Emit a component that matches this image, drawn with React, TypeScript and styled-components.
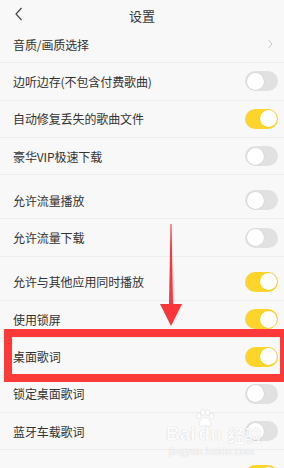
import React from "react";
import styled, { createGlobalStyle } from "styled-components";

const Global = createGlobalStyle`
  html, body { margin: 0; padding: 0; background: #f8f8f8; }
  body { width: 284px; height: 468px; overflow: hidden; font-family: "Noto Sans CJK SC", "Noto Sans", sans-serif; }
`;

const Page = styled.div`
  position: relative;
  width: 284px;
  height: 468px;
  overflow: hidden;
  background: #f8f8f8;
`;

const Header = styled.div`
  height: 26px;
  display: flex;
  align-items: center;
  justify-content: center;
  position: relative;
`;

const BackBtn = styled.div`
  position: absolute;
  left: 14px;
  top: 7px;
  width: 12px;
  height: 14px;
  display: flex;
`;

const Title = styled.div`
  font-size: 13px;
  color: #333;
  line-height: 1;
  margin-top: 4px;
`;

const Group = styled.div<{ $gap?: boolean }>`
  display: flex;
  flex-direction: column;
  margin-top: ${(p) => (p.$gap ? "7px" : "0")};
`;

const Row = styled.div`
  height: 36.3px;
  border-bottom: 1px solid #ededed;
  display: flex;
  align-items: center;
  justify-content: space-between;
  padding: 0 6px 0 13px;
`;

const Label = styled.span`
  font-size: 12px;
  color: #333;
  letter-spacing: -0.1px;
`;

const Track = styled.div<{ $on: boolean }>`
  width: 33px;
  height: 20px;
  border-radius: 10px;
  box-sizing: border-box;
  background: ${(p) => (p.$on ? "#fdd52a" : "#e1e1e1")};
  position: relative;
  flex: none;
  margin-left: auto;
`;

const Knob = styled.div<{ $on: boolean }>`
  position: absolute;
  top: 1.5px;
  left: ${(p) => (p.$on ? "14.5px" : "1.5px")};
  width: 17px;
  height: 17px;
  border-radius: 50%;
  background: #fff;
  box-shadow: 0 0 0 0.5px rgba(0, 0, 0, 0.08);
`;

const Chevron = styled.div`
  width: 8px;
  height: 10px;
  margin-right: 4px;
  display: flex;
`;

const Highlight = styled.div`
  position: absolute;
  left: 4px;
  top: 329px;
  width: 282px;
  height: 53px;
  box-sizing: border-box;
  border: 8px solid #fd3a3a;
  border-right-width: 6px;
`;

const Arrow = styled.svg`
  position: absolute;
  left: 155px;
  top: 222px;
`;

const Watermark = styled.div`
  position: absolute;
  left: 166px;
  top: 409px;
  display: flex;
  flex-direction: column;
  align-items: flex-start;
  color: rgba(255, 255, 255, 0.95);
  text-shadow: 0 0 1px rgba(0, 0, 0, 0.22);
`;

const Paw = styled.svg`
  margin-left: 29px;
  margin-bottom: -3px;
`;

const WmLogo = styled.div`
  display: flex;
  align-items: flex-end;
  font-family: "Liberation Sans", Arial, sans-serif;
  font-weight: bold;
  font-size: 19px;
  line-height: 1;
  gap: 3px;
`;

const WmCn = styled.span`
  font-family: "Noto Sans CJK SC", sans-serif;
  font-size: 17px;
  margin-left: 3px;
`;

const WmUrl = styled.div`
  font-family: "Liberation Sans", Arial, sans-serif;
  font-size: 10px;
  margin-top: 3px;
  margin-left: 3px;
  letter-spacing: 0.3px;
`;

type Item = { label: string; on?: boolean; arrow?: boolean };

const groups: Item[][] = [
  [
    { label: "音质/画质选择", arrow: true },
    { label: "边听边存(不包含付费歌曲)", on: false },
    { label: "自动修复丢失的歌曲文件", on: true },
    { label: "豪华VIP极速下载", on: false },
  ],
  [
    { label: "允许流量播放", on: false },
    { label: "允许流量下载", on: false },
  ],
  [
    { label: "允许与其他应用同时播放", on: true },
    { label: "使用锁屏", on: true },
    { label: "桌面歌词", on: true },
    { label: "锁定桌面歌词", on: false },
    { label: "蓝牙车载歌词", on: false },
  ],
  [{ label: "", on: true }],
];

const Toggle = ({ on }: { on: boolean }) => (
  <Track $on={on}>
    <Knob $on={on} />
  </Track>
);

export default function App() {
  return (
    <Page>
      <Global />
      <Header>
        <BackBtn>
          <svg width="12" height="14" viewBox="0 0 12 14">
            <polyline points="7.5,1 2,7 7.5,13" fill="none" stroke="#444" strokeWidth="1.2" />
          </svg>
        </BackBtn>
        <Title>设置</Title>
      </Header>
      {groups.map((g, gi) => (
        <Group key={gi} $gap={gi > 0}>
          {g.map((it, ii) => (
            <Row key={gi + "-" + ii}>
              {it.label && <Label>{it.label}</Label>}
              {it.arrow ? (
                <Chevron>
                  <svg width="8" height="10" viewBox="0 0 8 10">
                    <polyline points="2.5,1 6,5 2.5,9" fill="none" stroke="#c9c9c9" strokeWidth="1" />
                  </svg>
                </Chevron>
              ) : (
                <Toggle on={!!it.on} />
              )}
            </Row>
          ))}
        </Group>
      ))}
      <Highlight />
      <Arrow width="32" height="106" viewBox="0 0 32 106">
        <polygon points="15.5,2 16.5,2 18,82 27,82 16,104 5,82 14,82" fill="#f9363a" />
      </Arrow>
      <Watermark>
        <Paw width="20" height="18" viewBox="0 0 20 18">
          <g fill="rgba(255,255,255,0.95)" stroke="rgba(0,0,0,0.12)" strokeWidth="0.6">
            <ellipse cx="4" cy="7" rx="2.2" ry="2.8" />
            <ellipse cx="8" cy="3.5" rx="2.2" ry="2.8" />
            <ellipse cx="12.5" cy="3.5" rx="2.2" ry="2.8" />
            <ellipse cx="16.5" cy="7" rx="2.2" ry="2.8" />
            <path d="M10 8.5c3 0 6 4 6 6.5 0 2-2 2.5-3 2.2-1-.3-2-.7-3-.7s-2 .4-3 .7c-1 .3-3-.2-3-2.2 0-2.5 3-6.5 6-6.5z" />
          </g>
        </Paw>
        <WmLogo>
          <span>Bai</span>
          <span>du</span>
          <WmCn>经验</WmCn>
        </WmLogo>
        <WmUrl>jingyan.baidu.com</WmUrl>
      </Watermark>
    </Page>
  );
}
